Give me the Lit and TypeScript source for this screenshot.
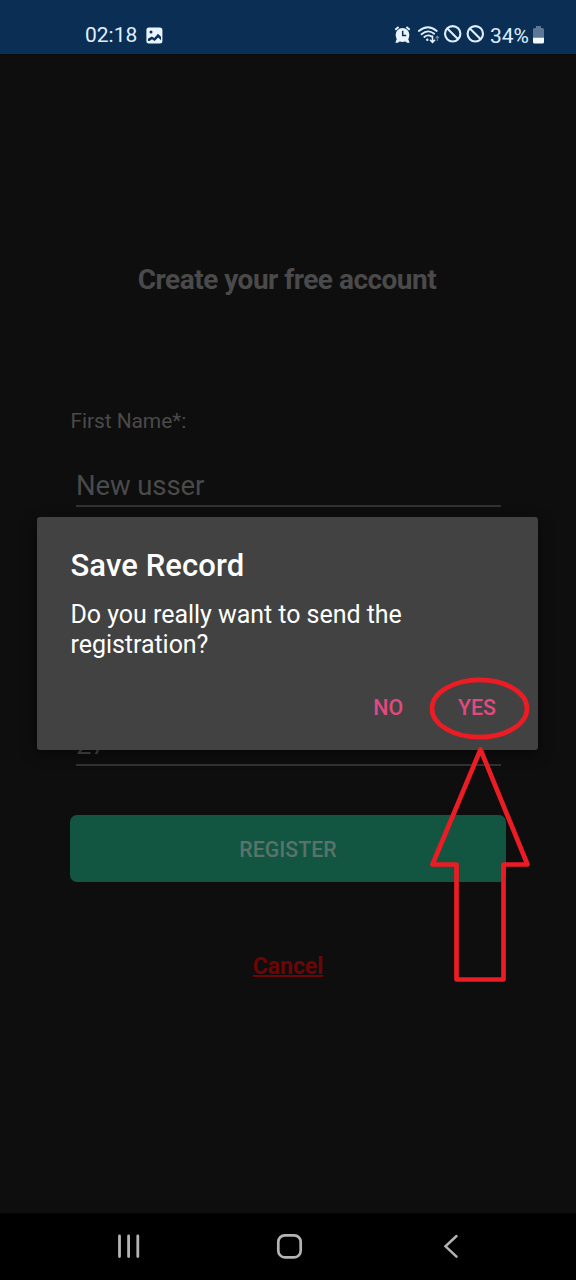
import { LitElement, html, css } from "lit";
import { customElement } from "lit/decorators.js";

@customElement("status-bar")
class StatusBar extends LitElement {
  static styles = css`
    :host { display: flex; box-sizing: border-box; height: 54px; padding: 17px 31px 0 85px; justify-content: space-between; background: #0a2e54; color: #dfefff; }
    .group { display: flex; align-items: center; height: 36px; }
    .text { font-size: 21px; line-height: 36px; white-space: nowrap; }
    .time { width: 61px; }
    svg { display: block; flex: none; }
  `;
  render() {
    return html`
      <div class="group">
        <span class="text time">02:18</span>
        <svg width="17" height="17" viewBox="0 0 17 17"><rect x=".4" y=".4" width="16" height="16" rx="2.5" fill="#e8f4ff"/><circle cx="5" cy="5" r="1.5" fill="#0a2e54"/><path d="M2 11.8 5.800 9.500 8.300 11 12 6.800 15 9.800V13.200L12.200 10.500 8.600 14 6 12.200 3.500 13.900H2Z" fill="#0a2e54"/></svg>
      </div>
      <div class="group">
        <svg width="151" height="36" viewBox="394 17 151 36" fill="none">
          <g fill="#e8f4ff"><circle cx="402.5" cy="35" r="6.9"/><path d="M397 38.5 395.3 42.8H398L400 41ZM408 38.5 409.700 42.8H407L405 41Z"/></g>
          <path d="M395.300 29.800 398.600 27M409.700 29.800 406.400 27" stroke="#e8f4ff" stroke-width="2"/>
          <path d="M402.700 30.800V35.500H406.200" stroke="#0a2e54" stroke-width="1.500"/>
          <g stroke="#dfefff" stroke-width="1.800" stroke-linecap="round"><path d="M418.800 31Q428 23.500 436.800 31M421.500 34.200Q428 28.800 434.200 33.800M424.300 37Q428 34 431.500 36.500"/></g>
          <circle cx="427.300" cy="39.700" r="1.200" fill="#e8f4ff"/>
          <path d="M432.500 35.500V42M430 39.700 432.500 42.300 435 39.700" stroke="#e8f4ff" stroke-width="1.500"/>
          <path d="M437.300 41V36.500M435.700 38 437.300 36.300 439 38" stroke="#6b86a5" stroke-width="1.100"/>
          <g stroke="#dfefff" stroke-width="2.100"><circle cx="452.700" cy="33.800" r="7.700"/><path d="M447.300 28.500 458.100 39.200"/><circle cx="475.300" cy="33.800" r="7.700"/><path d="M469.900 28.500 480.700 39.200"/></g>
          <path d="M536 26H541V28H542.500Q544 28 544 29.500V38H533V29.500Q533 28 534.500 28H536Z" fill="#5c7896"/>
          <path d="M533 37.800H544V42Q544 43.500 542.500 43.500H534.500Q533 43.500 533 42Z" fill="#f4faff"/>
          <text x="490" y="42.500" fill="#dfefff" font-family="Roboto, sans-serif" font-size="21">34%</text>
        </svg>
      </div>`;
  }
}

@customElement("register-form")
class RegisterForm extends LitElement {
  static styles = css`
    :host { display: flex; flex-direction: column; box-sizing: border-box; height: 1159px; padding: 206px 70px 0; background: #0e0e0e; color: #4a4a4a; }
    h1 { margin: 0; font-size: 28px; line-height: 40px; font-weight: 700; text-align: center; white-space: nowrap; letter-spacing: -.51px; padding-right: 2px; }
    .label { margin-top: 106px; font-size: 21px; line-height: 30px; padding-left: .5px; letter-spacing: -.1px; }
    .field { box-sizing: border-box; margin: 29px 5px 0 6px; height: 42px; line-height: 41px; font-size: 27.500px; letter-spacing: -.1px; border-bottom: 2px solid #323232; }
    .last { margin-top: 217px; line-height: 42px; }
    .register { margin-top: 49px; height: 67px; border-radius: 7px; background: #125641; color: #59736a; font-size: 21.300px; font-weight: 500; line-height: 69px; text-align: center; }
    .cancel { margin-top: 64px; color: #6c0606; font-size: 23px; font-weight: 700; line-height: 41px; text-align: center; text-decoration: underline; text-decoration-thickness: 1.500px; text-underline-offset: 1px; text-decoration-skip-ink: none; }
  `;
  render() {
    return html`
      <h1>Create your free account</h1>
      <div class="label">First Name*:</div>
      <div class="field">New usser</div>
      <div class="field last">27</div>
      <div class="register">REGISTER</div>
      <div class="cancel">Cancel</div>`;
  }
}

@customElement("confirm-dialog")
class ConfirmDialog extends LitElement {
  static styles = css`
    :host { display: block; box-sizing: border-box; width: 501px; height: 233px; padding: 29px 33px 0 33.500px; border-radius: 3px; background: #424242; color: #fff; box-shadow: 0 4px 14px rgba(0,0,0,.5); }
    h2 { margin: 0; font-size: 31px; line-height: 40px; font-weight: 500; letter-spacing: .1px; }
    p { margin: 14px 0 0; font-size: 25px; line-height: 29.500px; letter-spacing: -.04px; white-space: nowrap; }
    .actions { display: flex; justify-content: flex-end; margin-top: 34px; padding-right: 9px; gap: 55px; color: #e14a80; font-size: 21.300px; font-weight: 500; line-height: 30px; }
  `;
  render() {
    return html`
      <h2>Save Record</h2>
      <p>Do you really want to send the<br>registration?</p>
      <div class="actions"><span>NO</span><span>YES</span></div>`;
  }
}

@customElement("nav-bar")
class NavBar extends LitElement {
  static styles = css`
    :host { display: flex; align-items: center; box-sizing: border-box; height: 67px; padding: 0 0 2px 116px; background: #000; }
    svg { display: block; fill: none; stroke: #b4b4b4; stroke-linecap: round; }
    .home { margin: 0 138px 0 133px; }
  `;
  render() {
    return html`
      <svg width="26" height="28" viewBox="116 1232 26 28" stroke-width="2.800"><path d="M119.500 1236V1256.500M128.600 1236V1256.500M137.800 1236V1256.500"/></svg>
      <svg class="home" width="28" height="28" viewBox="275 1232 28 28" stroke-width="2.700"><rect x="278.300" y="1235.300" width="22.400" height="22" rx="6.500"/></svg>
      <svg width="20" height="28" viewBox="441 1232 20 28" stroke-width="2.500"><path d="M456.500 1236 445.500 1246.300 456.500 1256.700"/></svg>`;
  }
}

@customElement("app-root")
class AppRoot extends LitElement {
  static styles = css`
    :host { display: block; position: relative; width: 576px; height: 1280px; overflow: hidden; background: #000; font-family: Roboto, sans-serif; }
    confirm-dialog { position: absolute; left: 37px; top: 517px; }
    .marks { position: absolute; left: 425px; top: 672px; }
  `;
  render() {
    return html`
      <status-bar></status-bar>
      <register-form></register-form>
      <nav-bar></nav-bar>
      <confirm-dialog></confirm-dialog>
      <svg class="marks" width="110" height="316" viewBox="425 672 110 316" fill="none" stroke="#ec1c24" stroke-width="4.700" stroke-linejoin="round">
        <ellipse cx="479.500" cy="708.500" rx="47.500" ry="28.700"/>
        <path d="M480.500 749.500 432.500 864.500H456.500V979.500H503.500V864.500H527.500Z"/>
      </svg>`;
  }
}
